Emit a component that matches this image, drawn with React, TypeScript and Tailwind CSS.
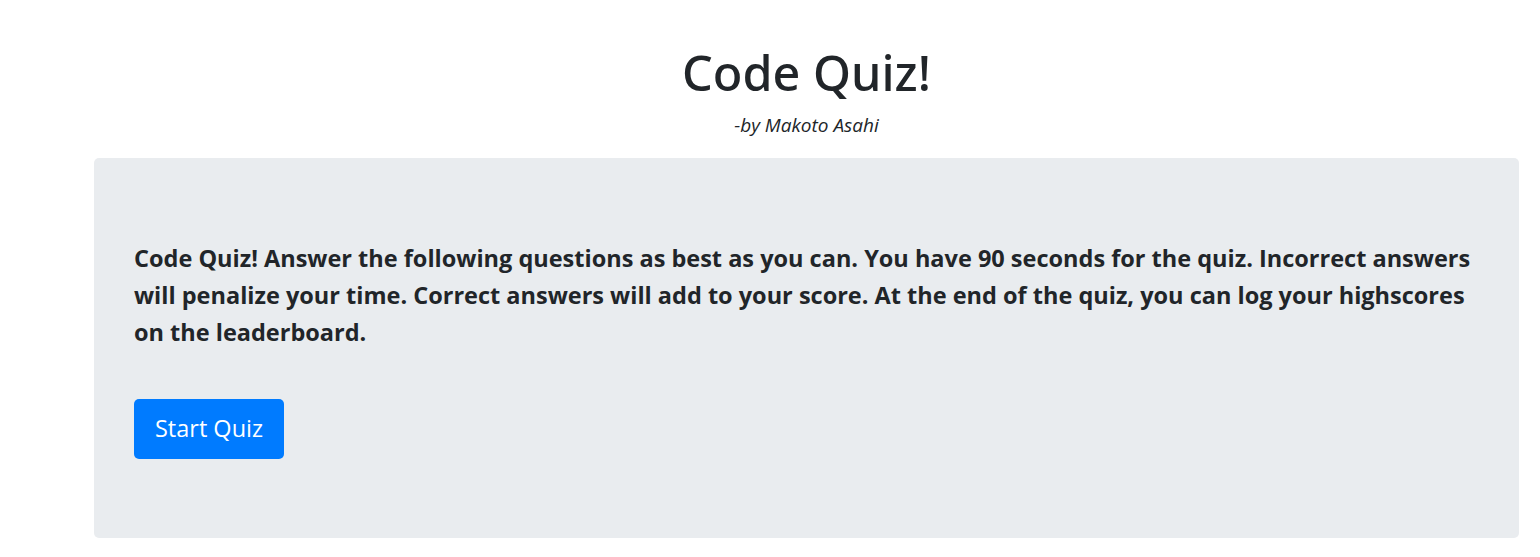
export default function App() {
  return (
    <div className="min-h-[557px] bg-white text-[#212529]" style={{ fontFamily: '"Open Sans", "Noto Sans", sans-serif' }}>
      <div className="ml-[94px] w-[1425px]">
        <header className="flex flex-col items-center pt-[38px]">
          <h1 className="text-[48.5px] leading-[68px] font-medium" style={{ fontFamily: '"Noto Sans", "Open Sans", sans-serif' }}>Code Quiz!</h1>
          <p className="mt-[6px] text-[19px] leading-[26px] italic">-by Makoto Asahi</p>
        </header>
        <section className="mt-[20px] rounded-[5px] bg-[#e9ecef] pl-[40px] pr-[40px] pt-[82px] pb-[79px]">
          <p className="text-[23.5px] leading-[37px] font-bold">
            Code Quiz! Answer the following questions as best as you can. You have 90 seconds for the quiz. Incorrect answers will penalize your time. Correct answers will add to your score. At the end of the quiz, you can log your highscores on the leaderboard.
          </p>
          <button className="mt-[48px] h-[60px] w-[150px] rounded-[5px] bg-[#007bff] text-[23.5px] text-white">
            Start Quiz
          </button>
        </section>
      </div>
    </div>
  );
}
